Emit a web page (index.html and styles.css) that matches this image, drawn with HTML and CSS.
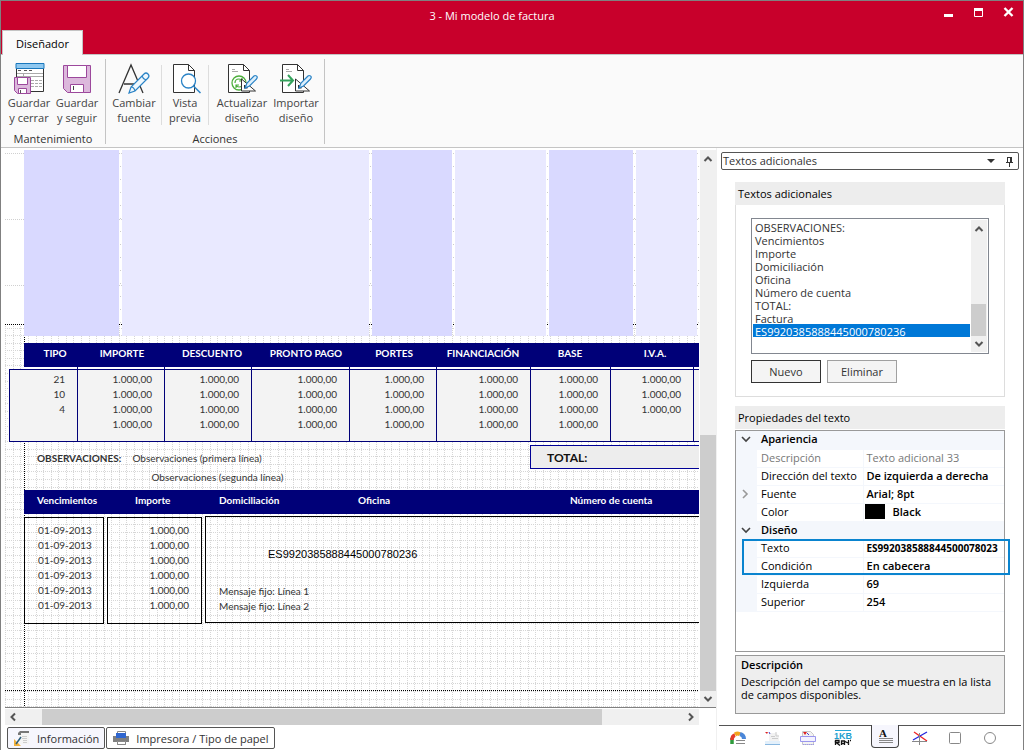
FILE: index.html
```html
<!DOCTYPE html>
<html lang="es">
<head>
<meta charset="utf-8">
<title>3 - Mi modelo de factura</title>
<link rel="stylesheet" href="styles.css">
</head>
<body>
<div class="window">
  <header class="titlebar">
    <div class="caption">
      <h1>3 - Mi modelo de factura</h1>
      <div class="window-buttons">
        <button aria-label="Minimizar"><svg width="12" height="12"><path d="M1 9.500h9" stroke="#fff" stroke-width="3"/></svg></button>
        <button aria-label="Maximizar"><svg width="12" height="12"><path d="M1.500 3.500h8v7h-8zM1 3.500h9" fill="none" stroke="#fff"/><path d="M1 3.500h9" stroke="#fff" stroke-width="3"/></svg></button>
        <button aria-label="Cerrar"><svg width="12" height="12"><path d="M1.500 2l8 8M9.500 2l-8 8" stroke="#fff" stroke-width="2.400"/></svg></button>
      </div>
    </div>
    <button class="ribbon-tab">Diseñador</button>
  </header>

  <nav class="ribbon">
    <section class="group">
      <div class="tools">
        <button class="tool"><svg width="32" height="32" viewBox="0 0 32 32"><path d="M3.500 2.500h27v27h-27z" fill="#fff" stroke="#333"/><path d="M3 1.500h28v5H3z" fill="#8fc8f0" stroke="#1a78bd"/><path d="M5 8.500h3m3 0h3m2 0h3" stroke="#555"/><path d="M4 11.500h26M4 14.500h26M10.500 11v4" stroke="#aaa"/><path d="M18 18.500h11M18 21.500h11M18 24.500h11" stroke="#aaa" stroke-dasharray="3 1"/><path d="M1.500 15.500h16v16H4.500l-3-3z" fill="#dcb8dc" stroke="#9c489c"/><path d="M4.500 15.500h10v7h-10zM5.500 26.500h8v5h-8z" fill="#fff" stroke="#9c489c"/><path d="M7.500 28v3" stroke="#555"/></svg><span>Guardar<br>y cerrar</span></button>
        <button class="tool"><svg width="32" height="32" viewBox="0 0 32 32"><path d="M2.500 3.500h27v27H6.500l-4-4z" fill="#dcb8dc" stroke="#9c489c"/><path d="M6.500 3.500h19v12h-19zM9.500 22.500h13v8h-13z" fill="#fff" stroke="#9c489c"/><path d="M12.500 24v4" stroke="#444"/></svg><span>Guardar<br>y seguir</span></button>
      </div>
      <h2>Mantenimiento</h2>
    </section>
    <section class="group">
      <div class="tools">
        <button class="tool"><svg width="32" height="32" viewBox="0 0 32 32"><path d="M1 31L13 3l12 28M6 22h15" fill="none" stroke="#333" stroke-width="1.300"/><path d="M11 31l2-6 13-13q2-2 4 0t0 4L17 29zM13 25q3 0 4 4M24 14q1 3 4 4" fill="#eef7fd" stroke="#2a83c6" stroke-width="1.200"/></svg><span>Cambiar<br>fuente</span></button>
        <i class="bar"></i>
        <button class="tool narrow"><svg width="32" height="32" viewBox="0 0 32 32"><path d="M4.500 2.500h15l6 6v22h-21z" fill="#fff" stroke="#333"/><path d="M19.500 2.500v6h6" fill="none" stroke="#333"/><circle cx="19.500" cy="19" r="7" fill="#fff" stroke="#2a83c6" stroke-width="1.300"/><path d="M24.500 24l7 7" stroke="#2a83c6" stroke-width="1.500"/></svg><span>Vista<br>previa</span></button>
        <i class="bar"></i>
        <button class="tool wide"><svg width="32" height="32" viewBox="0 0 32 32"><path d="M2.500 2.500h15l6 6v22h-21z" fill="#fff" stroke="#333"/><path d="M17.500 2.500v6h6" fill="none" stroke="#333"/><path d="M6 7.500h3M6 9.500h6" stroke="#aaa"/><circle cx="13" cy="21" r="7" fill="none" stroke="#4caf3c" stroke-width="1.300"/><path d="M9 21q0-4 4-4 2 0 3 2M17 21q0 4-4 4-2 0-3-2M16 16v3h-3M10 26v-3h3" fill="none" stroke="#4caf3c" stroke-width="1.200"/><path d="M15.500 17v12h14z" fill="#fff" stroke="#333"/><path d="M18.500 23v3h3z" fill="#fff" stroke="#333"/><path d="M19 26l2-5 7-7q1-1 2.500 0t0 3l-7 7z" fill="#dceffc" stroke="#2a83c6" stroke-width="1.200"/></svg><span>Actualizar<br>diseño</span></button>
        <button class="tool"><svg width="32" height="32" viewBox="0 0 32 32"><path d="M2.500 2.500h15l6 6v22h-21z" fill="#fff" stroke="#333"/><path d="M17.500 2.500v6h6" fill="none" stroke="#333"/><path d="M6 7.500h3M6 9.500h6" stroke="#aaa"/><path d="M15.500 17v12h14z" fill="#fff" stroke="#333"/><path d="M18.500 23v3h3z" fill="#fff" stroke="#333"/><path d="M0 18.500h12M8 13l5 5.500L8 24" fill="none" stroke="#35a35d" stroke-width="2"/><path d="M19 26l2-5 7-7q1-1 2.500 0t0 3l-7 7z" fill="#dceffc" stroke="#2a83c6" stroke-width="1.200"/></svg><span>Importar<br>diseño</span></button>
      </div>
      <h2>Acciones</h2>
    </section>
  </nav>

  <main class="workspace">
    <section class="designer">
      <div class="viewport">
        <div class="surface">
          <svg class="guides" width="100%" height="100%">
            <defs>
              <pattern id="grid" width="106" height="106" patternUnits="userSpaceOnUse" x="0" y="178">
                <g stroke="#d6d6d6" stroke-dasharray="1 1">
                  <path d="M.5 0v106M8.500 0v106M15.500 0v106M23.500 0v106M31.500 0v106M38.500 0v106M46.500 0v106M53.500 0v106M61.500 0v106M68.500 0v106M76.500 0v106M84.500 0v106M91.500 0v106M99.500 0v106"/>
                  <path d="M0 .5h106M0 7.500h106M0 15.500h106M0 22.500h106M0 30.500h106M0 37.500h106M0 45.500h106M0 53.500h106M0 60.500h106M0 68.500h106M0 75.500h106M0 83.500h106M0 90.500h106M0 98.500h106"/>
                </g>
              </pattern>
            </defs>
            <path d="M0 3.500h2000M0 69.500h2000M0 135.500h2000" stroke="#d0d0d0" stroke-dasharray="1 1"/>
            <path d="M115.500 16v158M365.500 16v158M448.500 16v158M542.500 16v158M629.500 16v158M693.500 16v158" stroke="#ccc" stroke-dasharray="1 12"/>
            <rect y="175" width="100%" height="100%" fill="url(#grid)"/>
            <path d="M0 174.500h2000M0 540.500h2000M19.500 175v400" stroke="#000" stroke-dasharray="1 1"/>
            <path d="M19 217h2000v2H19z" fill="#fff"/>
            <path d="M72.500 217v3M159.500 217v3M246.500 217v3M344.500 217v3M431.500 217v3M525.500 217v3M605.500 217v3M688.500 217v3" stroke="#000078"/>
          </svg>
          <div class="bands"><i></i><i></i><i></i><i></i><i></i><i></i></div>
          <div class="bar-head taxes-head"><b>TIPO</b><b>IMPORTE</b><b>DESCUENTO</b><b>PRONTO PAGO</b><b>PORTES</b><b>FINANCIACIÓN</b><b>BASE</b><b>I.V.A.</b></div>
          <table class="taxes">
            <colgroup><col class="w68"><col class="w87"><col class="w87"><col class="w98"><col class="w87"><col class="w94"><col class="w80"><col class="w83"><col class="w87"></colgroup>
            <tr><td>21</td><td>1.000,00</td><td>1.000,00</td><td>1.000,00</td><td>1.000,00</td><td>1.000,00</td><td>1.000,00</td><td>1.000,00</td><td></td></tr>
            <tr><td>10</td><td>1.000,00</td><td>1.000,00</td><td>1.000,00</td><td>1.000,00</td><td>1.000,00</td><td>1.000,00</td><td>1.000,00</td><td></td></tr>
            <tr><td>4</td><td>1.000,00</td><td>1.000,00</td><td>1.000,00</td><td>1.000,00</td><td>1.000,00</td><td>1.000,00</td><td>1.000,00</td><td></td></tr>
            <tr class="last"><td></td><td>1.000,00</td><td>1.000,00</td><td>1.000,00</td><td>1.000,00</td><td>1.000,00</td><td>1.000,00</td><td></td><td></td></tr>
          </table>
          <div class="notes">
            <div class="remarks">
              <b>OBSERVACIONES:</b>
              <div><p>Observaciones (primera línea)</p><p class="second">Observaciones (segunda línea)</p></div>
            </div>
            <div class="total">TOTAL:</div>
          </div>
          <div class="bar-head dues-head"><b>Vencimientos</b><b>Importe</b><b>Domiciliación</b><b>Oficina</b><b>Número de cuenta</b></div>
          <div class="dues">
            <div class="frame dates"><p>01-09-2013</p><p>01-09-2013</p><p>01-09-2013</p><p>01-09-2013</p><p>01-09-2013</p><p>01-09-2013</p></div>
            <div class="frame amounts"><p>1.000,00</p><p>1.000,00</p><p>1.000,00</p><p>1.000,00</p><p>1.000,00</p><p>1.000,00</p></div>
            <div class="frame bank"><p class="iban">ES9920385888445000780236</p><p>Mensaje fijo: Línea 1</p><p>Mensaje fijo: Línea 2</p></div>
          </div>
        </div>
        <div class="vscroll">
          <svg width="16" height="16"><path d="M4.500 11L8 7.500l3.500 3.500" fill="none" stroke="#555" stroke-width="2"/></svg>
          <i></i>
          <svg width="16" height="16"><path d="M4.500 6L8 9.500 11.500 6" fill="none" stroke="#555" stroke-width="2"/></svg>
        </div>
      </div>
      <div class="hscroll">
        <svg width="16" height="16"><path d="M10 4.500L6.500 8l3.500 3.500" fill="none" stroke="#555" stroke-width="2"/></svg>
        <i></i>
        <svg width="16" height="16"><path d="M6 4.500L9.500 8 6 11.500" fill="none" stroke="#555" stroke-width="2"/></svg>
      </div>
      <div class="doc-tabs">
        <button class="current"><svg width="18" height="18"><path d="M7 3h9v12H6V5z" fill="#f4f4f4"/><path d="M5 6V4l2-2h9v2H8v2z" fill="#777"/><path d="M9 7.500h5M9 9.500h5M10 11.500h4M10 13.500h4" stroke="#ccc"/><path d="M1 10v7h7z" fill="#f2b23c"/><path d="M3 15l5-7" stroke="#2d5f7d" stroke-width="1.500"/></svg>Información</button>
        <button><svg width="18" height="18"><path d="M5.500 2.500h8v13h-8z" fill="#fff" stroke="#888"/><path d="M1 7h16v6H1z" fill="#808080"/><path d="M4 4h10v5H4z" fill="#2f66cf"/><path d="M5.500 12.500h8v3h-8z" fill="#fff" stroke="#888"/></svg>Impresora / Tipo de papel</button>
      </div>
    </section>

    <aside class="panel">
      <div class="panel-title"><span>Textos adicionales</span>
        <button aria-label="Menú"><svg width="8" height="6"><path d="M0 1h8L4 5z" fill="#333"/></svg></button>
        <button aria-label="Fijar"><svg width="9" height="11"><path d="M2.500 1v5M6 1v5M2 1.500h5M1 6.500h7M4.500 7v4" fill="none" stroke="#333"/><path d="M5 1h2v5H5z" fill="#333"/></svg></button>
      </div>
      <div class="panel-body">
        <section class="texts">
          <h3><label for="texts">Textos adicionales</label></h3>
          <div class="texts-body">
            <div class="listbox">
              <select id="texts" size="10">
                <option>OBSERVACIONES:</option><option>Vencimientos</option><option>Importe</option><option>Domiciliación</option><option>Oficina</option><option>Número de cuenta</option><option>TOTAL:</option><option>Factura</option><option selected>ES9920385888445000780236</option>
              </select>
              <div class="vscroll list-scroll">
                <svg width="16" height="16"><path d="M4.500 11L8 7.500l3.500 3.500" fill="none" stroke="#555" stroke-width="2"/></svg>
                <i></i>
                <svg width="16" height="16"><path d="M4.500 6L8 9.500 11.500 6" fill="none" stroke="#555" stroke-width="2"/></svg>
              </div>
            </div>
            <div class="actions"><button class="primary">Nuevo</button><button>Eliminar</button></div>
          </div>
        </section>
        <section class="props">
          <h3>Propiedades del texto</h3>
          <div class="props-box">
            <table>
              <colgroup><col class="gutter"><col class="name"><col></colgroup>
              <tr class="category"><td><svg width="10" height="8"><path d="M1 2l4 4 4-4" fill="none" stroke="#444" stroke-width="1.600"/></svg></td><th colspan="2">Apariencia</th></tr>
              <tr class="readonly"><td></td><th>Descripción</th><td>Texto adicional 33</td></tr>
              <tr><td></td><th>Dirección del texto</th><td>De izquierda a derecha</td></tr>
              <tr><td><svg width="8" height="10"><path d="M2 1l4 4-4 4" fill="none" stroke="#999" stroke-width="1.600"/></svg></td><th>Fuente</th><td>Arial; 8pt</td></tr>
              <tr><td></td><th>Color</th><td><span class="color"><i></i>Black</span></td></tr>
              <tr class="category"><td><svg width="10" height="8"><path d="M1 2l4 4 4-4" fill="none" stroke="#444" stroke-width="1.600"/></svg></td><th colspan="2">Diseño</th></tr>
              <tr class="long"><td></td><th>Texto</th><td>ES992038588844500078023</td></tr>
              <tr><td></td><th>Condición</th><td>En cabecera</td></tr>
              <tr><td></td><th>Izquierda</th><td>69</td></tr>
              <tr><td></td><th>Superior</th><td>254</td></tr>
            </table>
            <i class="highlight"></i>
          </div>
        </section>
        <div class="help"><b>Descripción</b><p>Descripción del campo que se muestra en la lista de campos disponibles.</p></div>
      </div>
      <div class="kinds">
        <button aria-label="Gráfico"><svg width="18" height="18"><path d="M3 15V9" stroke="#2f9b3c" stroke-width="3.500"/><path d="M3 11q0-4 3-5" stroke="#e33b2a" stroke-width="3.500" fill="none"/><path d="M6 5.500q3-2 5 0" stroke="#f3a51b" stroke-width="4" fill="none"/><path d="M11 5q4 1 4 5" stroke="#4a86d8" stroke-width="4" fill="none"/><path d="M7 11.500h9M7 14.500h9" stroke="#888"/></svg></button>
        <button aria-label="Cabecera"><svg width="18" height="18"><path d="M5 4h7l3 3v7H5z" fill="#f2f2f2"/><path d="M12 3v4h3" fill="none" stroke="#ccc"/><path d="M1 3h3L3 5z" fill="#d22"/><path d="M5 3l1 2" stroke="#44c"/><path d="M7 7.500h4M8 9.500h6" stroke="#ccc"/><path d="M1 12h15v4H1z" fill="#e3f0fb"/><path d="M1 15.500h15" stroke="#8ab8e0"/></svg></button>
        <button aria-label="Zona"><svg width="18" height="18"><path d="M3.500 2.500h8l3 3v10h-11z" fill="#f2f2f2" stroke="#c8c8c8"/><path d="M4 3h4L6 6z" fill="#d22"/><path d="M8 4l2 2" stroke="#44c"/><path d="M1.500 7.500h15v5h-15z" fill="#f3f2ff" stroke="#9a96ee"/><path d="M4 15.500h11" stroke="#9a96ee" stroke-dasharray="1 1"/></svg></button>
        <button aria-label="Imagen"><svg width="18" height="18"><path d="M1 1.500h16" stroke="#28a8d8"/><text x="0" y="10" class="mark">1KB</text><path d="M1.500 11v5M1 11.500h4v2H2l4 3M7.500 16v-4h3v4M7 14.500h3M14.500 11v5M11 12.500l4 2M16 11.500h1" stroke="#111" fill="none" stroke-width="1.300"/></svg></button>
        <button class="current" aria-label="Texto"><svg width="18" height="18"><text x="3" y="10" class="letter">A</text><path d="M3 11.500h14M3 13.500h14M3 15.500h14" stroke="#888"/></svg></button>
        <button aria-label="Línea"><svg width="18" height="18"><path d="M3 3l13 9" stroke="#e22" stroke-width="1.300"/><path d="M2 11L16 3" stroke="#22d" stroke-width="1.300"/><path d="M1 12.500h15M8.500 4v12" stroke="#888"/></svg></button>
        <button aria-label="Rectángulo"><svg width="18" height="18"><rect x="3.500" y="3.500" width="11" height="11" rx="1" fill="#fff" stroke="#888"/></svg></button>
        <button aria-label="Elipse"><svg width="18" height="18"><circle cx="9" cy="9" r="5.500" fill="#fff" stroke="#888"/></svg></button>
      </div>
    </aside>
  </main>
</div>
</body>
</html>
```
FILE: styles.css
```css
* { box-sizing: border-box; }
body { margin: 0; font: 11px/15px "Open Sans", "Noto Sans", sans-serif; color: #333; }
h1, h2, h3, p { margin: 0; font-size: 11px; font-weight: 400; }
button, select { font: inherit; color: inherit; margin: 0; }
button { border: 0; padding: 0; background: none; }
svg { display: block; flex: none; }
table { border-collapse: collapse; table-layout: fixed; }
td, th { padding: 0; }

.window { height: 100vh; display: flex; flex-direction: column; border: 1px solid #808080; border-bottom: 0; background: #fff; }
.titlebar { background: #c8002b; color: #fff; border-bottom: 1px solid #c4c4c4; height: 54px; display: flex; flex-direction: column; justify-content: space-between; align-items: flex-start; flex: none; }
.caption { width: 100%; display: flex; align-items: flex-start; }
.caption h1 { flex: 1; text-align: center; padding: 7px 0 0 40px; }
.window-buttons { display: flex; gap: 18px; padding: 5px 8px 0 0; }
.ribbon-tab { height: 25px; width: 81px; margin: 0 0 -1px 1px; background: #fafafa; border: 1px solid #c4c4c4; border-bottom: 0; color: #000; }

.ribbon { display: flex; height: 93px; flex: none; padding: 4px 0 0 4px; background: #fafafa; border-bottom: 1px solid #c4c4c4; }
.group { border-right: 1px solid #c4c4c4; height: 85px; display: flex; flex-direction: column; justify-content: space-between; padding: 3px 4px 0 0; }
.group + .group { padding: 3px 2px 0; }
.group h2 { text-align: center; line-height: 11px; }
.tools { display: flex; }
.tool { width: 48px; display: flex; flex-direction: column; align-items: center; gap: 1px; white-space: nowrap; color: #444; }
.group + .group .tool { width: 52px; }
.group + .group .narrow { width: 44px; }
.group + .group .wide { width: 60px; padding-left: 4px; }
.bar { width: 1px; background: #ddd; margin: 3px 1px 0; height: 60px; }

.workspace { flex: 1; min-height: 0; display: flex; }
.designer { flex: 1; min-width: 0; display: flex; flex-direction: column; padding: 2px 0 0 4px; border-right: 1px solid #f0f0f0; }
.viewport { flex: 1; min-height: 0; display: flex; border-bottom: 1px solid #808080; }
.surface { flex: 1; min-width: 0; overflow: hidden; position: relative; font: 10px/15px Lato, "Open Sans", sans-serif; }
.surface > * { position: relative; }
.surface > .guides { position: absolute; inset: 0; }
.surface p { font-size: 10px; }

.bands { height: 186px; display: grid; grid-template-columns: 95px 247px 80px 91px 84px 61px; column-gap: 3px; margin-left: 19px; }
.bands i { background: #e9e9ff; }
.bands i:nth-child(odd) { background: #d9d9ff; }
.bar-head { background: #000078; color: #fff; height: 24px; margin-left: 19px; display: grid; align-items: center; padding-bottom: 3px; white-space: nowrap; }
.taxes-head { margin-top: 7px; grid-template-columns: 62px 72px 108px 80px 96px 82px 92px 78px; text-align: center; }
.taxes { margin: 2px 0 0 4px; width: 772px; background: #f3f3f3; border: 1px solid #000078; }
.taxes td { border-left: 1px solid #000078; text-align: right; padding-right: 12px; height: 15px; }
.taxes tr:first-child td { padding-top: 2px; height: 17px; }
.taxes .last td { padding-bottom: 9px; height: 24px; }
.w68 { width: 68px; } .w87 { width: 87px; } .w98 { width: 98px; } .w94 { width: 94px; } .w80 { width: 80px; } .w83 { width: 83px; }

.notes { display: flex; height: 45px; margin-top: 3px; }
.remarks { width: 525px; flex: none; display: flex; gap: 11px; padding: 6px 0 0 32px; }
.remarks p { height: 19px; }
.second { padding-left: 19px; }
.total { flex: 1; height: 24px; background: #ededed; border: 1px solid #000096; border-right: 0; padding: 4px 0 0 16px; font-size: 12px; font-weight: 700; color: #111; }
.dues-head { grid-template-columns: 98px 84px 139px 212px 124px; padding-left: 13px; }
.dues { display: flex; gap: 3px; margin: 2px 0 0 19px; }
.frame { border: 1px solid #000; height: 107px; margin-top: 1px; padding-top: 5px; }
.dates { width: 80px; padding-left: 2px; text-align: center; }
.amounts { width: 95px; text-align: right; padding-right: 12px; }
.bank { flex: 1; margin-top: 0; border-right: 0; padding: 30px 0 0 13px; }
.bank .iban { font: 11px/15px "Liberation Sans", Arial, sans-serif; color: #000; padding-left: 49px; margin-bottom: 22px; }

.vscroll { width: 16px; margin-left: 1px; flex: none; background: #f0f0f0; display: flex; flex-direction: column; }
.vscroll i { flex: 1; margin-top: 269px; background: #cdcdcd; }
.hscroll { height: 16px; margin-top: 1px; margin-right: 17px; background: #f0f0f0; display: flex; justify-content: space-between; }
.hscroll i { width: 560px; margin-right: 60px; background: #cdcdcd; }
.doc-tabs { display: flex; gap: 1px; padding: 2px 0 1px 2px; }
.doc-tabs button { height: 22px; border: 1px solid #555; border-radius: 2px; display: flex; align-items: center; gap: 6px; padding: 0 5px; }
.doc-tabs .current { background: #f6f6fd; }

.panel { width: 306px; flex: none; display: flex; flex-direction: column; padding: 4px 2px 0; }
.panel-title { height: 18px; border: 1px solid #555; border-radius: 2px; margin: 0 2px; display: flex; align-items: center; gap: 10px; padding: 0 4px 0 1px; }
.panel-title span { flex: 1; padding-bottom: 1px; }
.panel-body { flex: 1; min-height: 0; padding: 12px 16px 11px; display: flex; flex-direction: column; }
.panel h3 { background: #ededed; color: #000; height: 23px; line-height: 23px; padding-left: 3px; }
.texts-body { border: 1px solid #ddd; border-top: 0; height: 192px; padding: 13px 15px; }
.listbox { height: 136px; display: flex; border: 1px solid #828790; padding: 1px; }
.listbox select { flex: 1; min-width: 0; border: 0; border-radius: 0; outline: 0; padding: 0; overflow: hidden; background: #fff; height: 132px; }
.listbox option { height: 13px; min-height: 13px; line-height: 12px; padding: 0 2px; }
.listbox option:checked { background: #0078d7 linear-gradient(#0078d7, #0078d7); color: #fff; }
.list-scroll i { margin: 68px 1px 0 0; }
.actions { display: flex; gap: 6px; margin-top: 6px; }
.actions button { width: 70px; height: 23px; background: #f4f4f4; border: 1px solid #a0a0a0; }
.actions .primary { border-color: #333; }

.props { margin-top: 9px; flex: 1; display: flex; flex-direction: column; min-height: 0; }
.props-box { margin-top: 1px; flex: 1; border: 1px solid #999; position: relative; }
.props table { width: 100%; color: #000; }
.gutter { width: 21px; } .name { width: 106px; }
.props td, .props th { height: 18px; line-height: 16px; border-bottom: 1px solid #f4f7fc; text-align: left; white-space: nowrap; overflow: hidden; padding: 0 0 1px 4px; font-weight: 400; }
.props td:first-child { background: #f4f7fc; padding-left: 5px; }
.props td:last-child { font-weight: 600; border-left: 1px solid #f4f7fc; padding-left: 3px; }
.props .category > * { background: #f4f7fc; font-weight: 600; }
.props .readonly > :nth-child(n+2) { color: #777; font-weight: 400; }
.props .long td:last-child { font-size: 10px; font-weight: 700; }
.color { display: flex; gap: 8px; margin-left: -2px; }
.color i { width: 20px; height: 15px; background: #000; }
.highlight { position: absolute; left: 6px; right: -6px; top: 108px; height: 36px; border: 2px solid #0a84cf; }
.help { margin-top: 3px; height: 59px; flex: none; background: #eee; border: 1px solid #999; color: #000; padding: 1px 5px; line-height: 13px; }
.help b { font-weight: 600; line-height: 16px; display: block; margin-bottom: 2px; }
.kinds { height: 25px; flex: none; border-top: 1px solid #555; display: flex; padding-left: 1px; }
.kinds button { width: 35px; height: 23px; display: flex; align-items: center; justify-content: center; }
.kinds .current { width: 28px; margin: -1px 3px 0 11px; border: 1px solid #444; border-top: 0; border-radius: 0 0 4px 4px; background: #f6f6fd; }
.mark { font: 700 9px "Liberation Sans", sans-serif; fill: #1f9fd0; }
.letter { font: 700 11px "Liberation Serif", serif; fill: #111; }
```
